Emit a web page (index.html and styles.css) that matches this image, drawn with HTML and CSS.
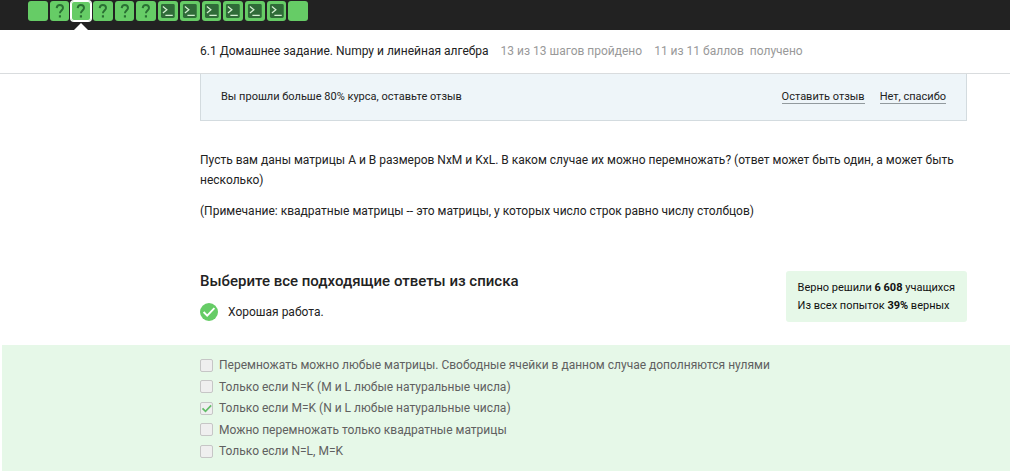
FILE: index.html
```html
<!DOCTYPE html>
<html lang="ru">
<head>
<meta charset="utf-8">
<meta name="viewport" content="width=device-width, initial-scale=1">
<title>6.1 Домашнее задание. Numpy и линейная алгебра</title>
<link rel="stylesheet" href="styles.css">
</head>
<body>
<svg class="sprite" aria-hidden="true">
  <symbol id="question" viewBox="0 0 20 20"><path d="M6.8 7C7 4.9 8.2 4 10 4c2 0 3.2 1.1 3.2 2.9 0 2.4-3.1 2.8-3.1 5.4" fill="none" stroke="#2a7033" stroke-width="2"/><path d="M9 14.3h2.2v2.3H9z" fill="#2a7033"/></symbol>
  <symbol id="terminal" viewBox="0 0 20 20"><rect x="3" y="3" width="14" height="14" rx="1.5" fill="#2f6b38"/><path d="M5 5.5l4 3.3-4 3.3M7.5 14.5H15" fill="none" stroke="#d4f0d2" stroke-width="1.3"/></symbol>
</svg>
<div class="topbar">
  <nav class="steps" aria-label="Шаги урока">
    <a class="step" href="#1" aria-label="Шаг 1"></a>
    <a class="step" href="#2" aria-label="Шаг 2"><svg class="glyph"><use href="#question"/></svg></a>
    <a class="step step-active" href="#3" aria-label="Шаг 3" aria-current="step"><svg class="glyph"><use href="#question"/></svg></a>
    <a class="step" href="#4" aria-label="Шаг 4"><svg class="glyph"><use href="#question"/></svg></a>
    <a class="step" href="#5" aria-label="Шаг 5"><svg class="glyph"><use href="#question"/></svg></a>
    <a class="step" href="#6" aria-label="Шаг 6"><svg class="glyph"><use href="#question"/></svg></a>
    <a class="step" href="#7" aria-label="Шаг 7"><svg class="glyph"><use href="#terminal"/></svg></a>
    <a class="step" href="#8" aria-label="Шаг 8"><svg class="glyph"><use href="#terminal"/></svg></a>
    <a class="step" href="#9" aria-label="Шаг 9"><svg class="glyph"><use href="#terminal"/></svg></a>
    <a class="step" href="#10" aria-label="Шаг 10"><svg class="glyph"><use href="#terminal"/></svg></a>
    <a class="step" href="#11" aria-label="Шаг 11"><svg class="glyph"><use href="#terminal"/></svg></a>
    <a class="step" href="#12" aria-label="Шаг 12"><svg class="glyph"><use href="#terminal"/></svg></a>
    <a class="step" href="#13" aria-label="Шаг 13"></a>
  </nav>
</div>
<header class="lesson column">
  <h1 class="lesson-title">6.1 Домашнее задание. Numpy и линейная алгебра</h1>
  <span>13 из 13 шагов пройдено</span>
  <span>11 из 11 баллов&nbsp; получено</span>
</header>
<main>
  <div class="column">
    <section class="review">
      <span class="review-text">Вы прошли больше 80% курса, оставьте отзыв</span>
      <a class="review-link" href="#review">Оставить отзыв</a>
      <a class="review-link" href="#dismiss">Нет, спасибо</a>
    </section>
    <section class="task">
      <p>Пусть вам даны матрицы А и В размеров NxM и KxL. В каком случае их можно перемножать? (ответ может быть один, а может быть несколько)</p>
      <p>(Примечание: квадратные матрицы -- это матрицы, у которых число строк равно числу столбцов)</p>
    </section>
    <section class="result">
      <div>
        <h2 class="result-title" id="quiz-title">Выберите все подходящие ответы из списка</h2>
        <p class="verdict"><svg class="verdict-icon" viewBox="0 0 18 18" aria-hidden="true"><circle cx="9" cy="9" r="9" fill="#66cc66"/><path d="M3.6 9l3.6 3.6 7.2-7.4" fill="none" stroke="#fff" stroke-width="1.9"/></svg>Хорошая работа.</p>
      </div>
      <div class="stats">
        <div>Верно решили <b>6 608</b> учащихся</div>
        <div>Из всех попыток <b>39%</b> верных</div>
      </div>
    </section>
  </div>
  <form class="quiz" aria-labelledby="quiz-title">
    <div class="column options">
      <label class="option"><input class="box" type="checkbox" disabled>Перемножать можно любые матрицы. Свободные ячейки в данном случае дополняются нулями</label>
      <label class="option"><input class="box" type="checkbox" disabled>Только если N=K (M и L любые натуральные числа)</label>
      <label class="option"><span class="checked"><input class="box" type="checkbox" checked disabled><svg class="tick" viewBox="0 0 13 13" aria-hidden="true"><path d="M2.5 6.3l3 3 5.7-6" fill="none" stroke="#62bd68" stroke-width="1.7"/></svg></span>Только если M=K (N и L любые натуральные числа)</label>
      <label class="option"><input class="box" type="checkbox" disabled>Можно перемножать только квадратные матрицы</label>
      <label class="option"><input class="box" type="checkbox" disabled>Только если N=L, M=K</label>
    </div>
  </form>
</main>
</body>
</html>
```
FILE: styles.css
```css
* { box-sizing: border-box; }
body {
  margin: 0;
  background: #fff;
  color: #222;
  font: 12px/20px Roboto, "Noto Sans", sans-serif;
}
h1, h2, p { margin: 0; }
.sprite { display: none; }
.column { padding-left: 200px; padding-right: 43px; }

.topbar { padding: 1px 28px 9px; background: #222; }
.steps { display: flex; gap: 2px; max-width: 280px; }
.step {
  position: relative;
  flex: 1;
  height: 20px;
  border-radius: 3px;
  background: #66cc66;
}
.glyph { display: block; width: 100%; height: 20px; }
.step-active { box-shadow: inset 0 0 0 1px #fff, 0 0 0 1px #fff; }
.step-active::after {
  content: "";
  position: absolute;
  top: 22px;
  left: 50%;
  margin-left: -7px;
  border: 7px solid transparent;
  border-top: 0;
  border-bottom-color: #fff;
}

.lesson {
  display: flex;
  flex-wrap: wrap;
  gap: 12px;
  padding-top: 11px;
  padding-bottom: 12px;
  border-bottom: 1px solid #d9dcde;
  color: #999;
}
.lesson-title { font-size: 12px; font-weight: 400; color: #222; }

.review {
  display: flex;
  gap: 15px;
  padding: 13px 20px;
  border: 1px solid #d3dbdf;
  border-top: 0;
  background: #eef5f9;
  font-size: 11px;
}
.review-text { flex: 1; }
.review-link {
  align-self: center;
  border-bottom: 1px solid #929a9e;
  color: #222;
  line-height: 13px;
  text-decoration: none;
}

.task { display: grid; gap: 11px; padding-top: 29px; }

.result {
  display: flex;
  justify-content: space-between;
  align-items: flex-start;
  padding: 50px 0 23px;
}
.result-title { font-size: 15px; font-weight: 500; }
.verdict { display: flex; align-items: center; gap: 10px; padding-top: 11px; }
.verdict-icon { width: 18px; height: 18px; }
.stats {
  padding: 8px 12px 7px;
  border-radius: 3px;
  background: #e6f8e8;
  color: #111;
  font-size: 11px;
  line-height: 18px;
}

.quiz {
  margin-left: 2px;
  padding: 10px 0;
  background: #e6f8e8;
  color: #606060;
}
.options {
  display: grid;
  align-content: space-between;
  min-height: 106px;
  padding-left: 198px;
}
.option { display: flex; align-items: center; gap: 6px; }
.box {
  appearance: none;
  display: block;
  width: 13px;
  height: 13px;
  margin: 0;
  border: 1px solid #c6c6c6;
  border-radius: 2px;
  background: #efefef;
}
.checked { position: relative; }
.tick { position: absolute; inset: 0; }
```
